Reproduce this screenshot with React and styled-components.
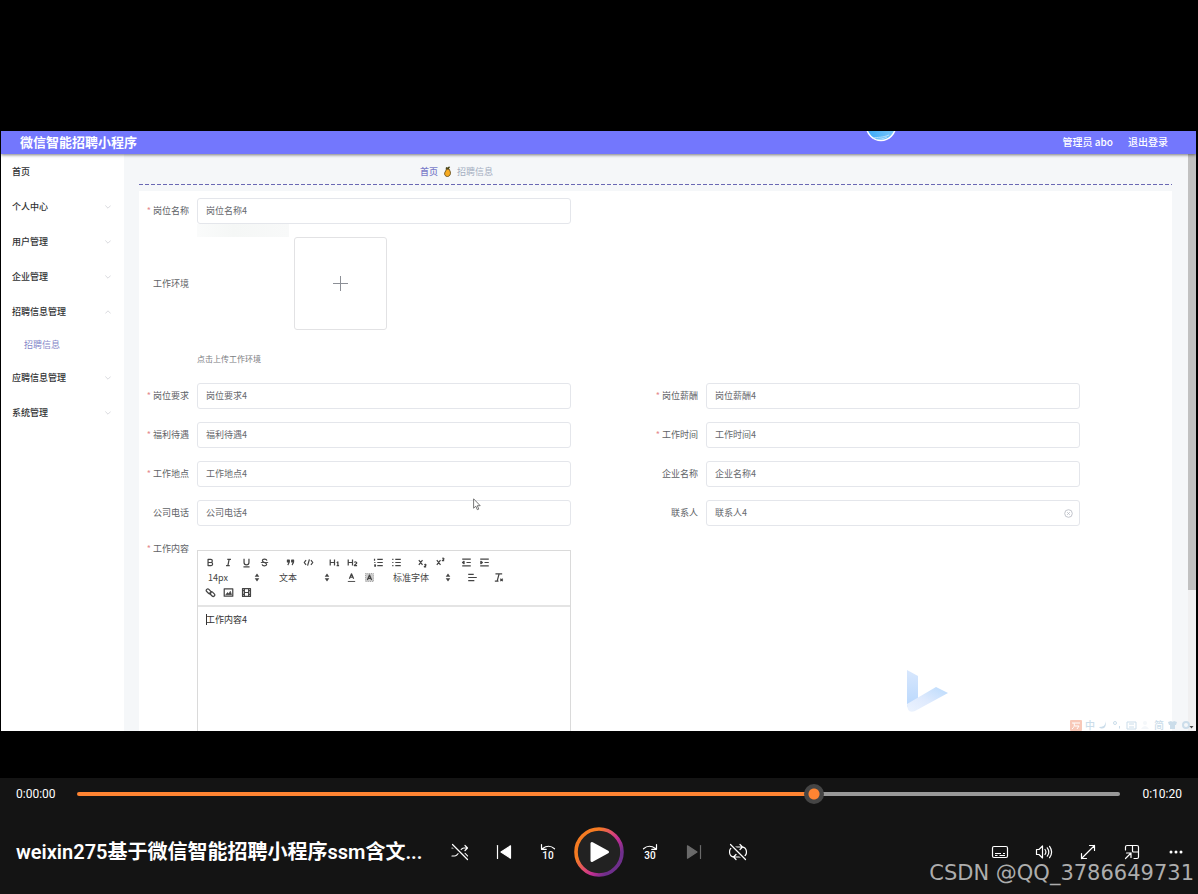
import React from "react";
import styled, { createGlobalStyle } from "styled-components";

const Global = createGlobalStyle`
  *, *::before, *::after { box-sizing: border-box; }
  body { margin: 0; background: #000; }
  button, input, select, textarea { font: inherit; color: inherit; margin: 0; padding: 0; border: 0; background: none; outline: none; }
  button { cursor: pointer; }
  a { color: inherit; text-decoration: none; }
  ul { list-style: none; margin: 0; padding: 0; }
  svg { display: block; flex: none; }
`;

/* ---------- player shell ---------- */

const Player = styled.div`
  display: flex;
  flex-direction: column;
  position: relative;
  min-height: 100vh;
  background: #000;
  color: #fff;
  font-family: Roboto, "Noto Sans CJK SC", sans-serif;
`;

const Stage = styled.main`
  flex: 1;
  display: flex;
  padding: 131px 2px 47px 1px;
`;

const Screen = styled.section`
  position: relative;
  flex: 1;
  min-width: 0;
  display: flex;
  flex-direction: column;
  overflow: hidden;
  background: #f5f7f9;
  color: #606266;
  font-family: "Noto Sans CJK SC", sans-serif;
  font-size: 9px;
  line-height: 12px;
`;

/* ---------- recorded admin page ---------- */

const TopBar = styled.header`
  position: relative;
  z-index: 1;
  flex: none;
  display: flex;
  align-items: center;
  justify-content: space-between;
  height: 23px;
  padding: 0 28px 2px 19px;
  background: #7377fd;
  color: #fff;
  box-shadow: 0 1px 3px rgba(0, 0, 0, 0.5);
`;

const SiteTitle = styled.h1`
  margin: 0;
  font-size: 13px;
  line-height: 20px;
  font-weight: 700;
`;

const Account = styled.div`
  display: flex;
  gap: 15px;
  font-size: 10px;
  line-height: 14px;
  font-weight: 500;
`;

const Orb = styled.svg`
  position: absolute;
  top: 0;
  left: 864px;
`;

const Body = styled.div`
  flex: 1;
  display: flex;
  min-height: 0;
`;

const Sidebar = styled.nav`
  flex: none;
  width: 123px;
  background: #fff;
  color: #303133;
`;

const MenuLink = styled.a`
  display: flex;
  align-items: center;
  justify-content: space-between;
  height: ${(p) => (p.$sub ? 31 : 35)}px;
  padding: 0 13px 0 ${(p) => (p.$sub ? 23 : 11)}px;
  color: ${(p) => (p.$sub ? "#8486c8" : "#303133")};
  font-weight: ${(p) => (p.$sub ? 400 : 500)};
`;

const Content = styled.div`
  flex: 1;
  min-width: 0;
  display: flex;
  flex-direction: column;
  padding: 0 16px 0 15px;
`;

const Crumbs = styled.div`
  display: flex;
  align-items: center;
  gap: 6px;
  height: 30px;
  padding: 5px 0 0 281px;
  color: #a3adc0;
`;

const CrumbHome = styled.a`
  color: #7b7cc9;
  font-weight: 500;
`;

const Dashes = styled.div`
  flex: none;
  height: 1px;
  margin-bottom: 6px;
  background: repeating-linear-gradient(90deg, #6a68b4 0 4px, transparent 4px 6px);
`;

const Panel = styled.form`
  flex: 1;
  display: flex;
  flex-direction: column;
  padding: 7px 15px 0 0;
  background: #fff;
`;

const Grid = styled.div`
  display: grid;
  grid-template-columns: 1fr 1fr;
  row-gap: 13px;
`;

const Field = styled.div`
  display: flex;
  align-items: center;
`;

const Label = styled.label`
  flex: none;
  width: 58px;
  padding-right: 8px;
  text-align: right;
  white-space: nowrap;
  color: #606266;

  &::before {
    content: "${(p) => (p.$required ? "*" : "")}";
    margin-right: 2px;
    color: #e58c8c;
  }
`;

const InputBox = styled.div`
  display: flex;
  align-items: center;
  flex: none;
  width: calc(100% - 135px);
  height: 26px;
  padding: 0 6px 0 8px;
  border: 1px solid #e4e6eb;
  border-radius: 3px;
  background: #fff;
`;

const TextInput = styled.input`
  flex: 1;
  min-width: 0;
  height: 14px;
  line-height: 14px;
  color: #66686d;
`;

const UploadRow = styled.div`
  display: flex;
  align-items: center;
  height: 93px;
  margin-top: 13px;
`;

const Preview = styled.div`
  align-self: flex-start;
  width: 92px;
  height: 92px;
  margin-right: 5px;
`;

const UploadButton = styled.button`
  display: grid;
  place-items: center;
  width: 93px;
  height: 93px;
  border: 1px solid #e2e2e4;
  border-radius: 3px;
`;

const UploadTip = styled.p`
  margin: 23px 0 18px;
  padding-left: 58px;
  font-size: 8px;
  line-height: 12px;
  color: #7b7d82;
`;

const EditorField = styled.div`
  flex: 1;
  display: flex;
  margin-top: 17px;
`;

const EditorBox = styled.div`
  flex: none;
  width: calc(50% - 135px);
  margin-top: 7px;
  display: flex;
  flex-direction: column;
  border: 1px solid #dadada;
  border-bottom: 0;
`;

const Toolbar = styled.div`
  padding: 4px 3px 5px;
  border-bottom: 2px solid #e4e4e4;
  color: #444;
`;

const ToolRow = styled.div`
  display: flex;
  gap: 8px;
  height: 15px;
`;

const ToolGroup = styled.div`
  display: flex;
`;

const Tool = styled.button`
  display: grid;
  place-items: center;
  width: 18px;
  height: 15px;
`;

const Picker = styled.label`
  display: flex;
  align-items: center;
  justify-content: space-between;
  width: ${(p) => p.$width}px;
  padding: 0 4px 0 7px;
`;

const PickerSelect = styled.select`
  appearance: none;
  flex: 1;
  min-width: 0;
  height: 15px;
  line-height: 15px;
`;

const EditorText = styled.textarea`
  flex: 1;
  display: block;
  width: 100%;
  padding: 7px 8px;
  resize: none;
  line-height: 12px;
  color: #333;
`;

const ScrollTrack = styled.div`
  flex: none;
  width: 8px;
  background: #f0f0f1;
`;

const ScrollThumb = styled.div`
  height: 75.5%;
  background: #c1c1c1;
`;

const Float = styled.svg`
  position: absolute;
  left: ${(p) => p.$left};
  right: ${(p) => p.$right};
  top: ${(p) => p.$top};
  bottom: ${(p) => p.$bottom};
  pointer-events: none;
`;

const ImeBar = styled.div`
  position: absolute;
  right: 0;
  bottom: 0;
  display: flex;
  align-items: center;
  gap: 3px;
  height: 12px;
  color: #cbddea;
  font-size: 10px;
  line-height: 12px;
  font-weight: 500;
`;

/* ---------- player controls ---------- */

const Controls = styled.footer`
  background: #141414;
`;

const SeekRow = styled.div`
  display: flex;
  align-items: center;
  height: 32px;
  padding: 0 16px;
  font-size: 12px;
  line-height: 16px;
`;

const Time = styled.span`
  flex: none;
  width: ${(p) => (p.$end ? "auto" : "61px")};
  padding-left: ${(p) => (p.$end ? 22 : 0)}px;
`;

const Seek = styled.input`
  appearance: none;
  flex: 1;
  min-width: 0;
  height: 20px;

  &::-webkit-slider-runnable-track {
    height: 4px;
    border-radius: 2px;
    background: linear-gradient(90deg, #ff8432 0 71%, #999 71%);
  }
  &::-webkit-slider-thumb {
    appearance: none;
    width: 20px;
    height: 20px;
    margin-top: -8px;
    border-radius: 50%;
    background: radial-gradient(circle, #ff8432 0 5px, #454545 6px);
  }
`;

const Deck = styled.div`
  display: grid;
  grid-template-columns: minmax(0, 1fr) auto minmax(0, 1fr);
  align-items: center;
  height: 84px;
`;

const MediaTitle = styled.h2`
  margin: 0;
  padding-left: 16px;
  font-size: 20px;
  line-height: 28px;
  font-weight: 600;
  white-space: nowrap;
  overflow: hidden;
`;

const Buttons = styled.div`
  display: flex;
  align-items: center;
  justify-content: flex-end;
`;

const IconButton = styled.button`
  display: grid;
  place-items: center;
  width: 44px;
  height: 44px;
  color: ${(p) => (p.disabled ? "#6a6a6a" : "#fff")};
`;

const PlayButton = styled.button`
  display: grid;
  place-items: center;
  width: 50px;
  height: 50px;
  margin: 0 4px;
`;

const Watermark = styled.div`
  position: absolute;
  right: 4px;
  bottom: 7px;
  font-family: "DejaVu Sans", sans-serif;
  font-size: 21px;
  line-height: 28px;
  color: #adadad;
`;

/* ---------- drawings ---------- */

const Line = ({ size = 18, children, w = 1.2 }) => (
  <svg width={size} height={size} viewBox={`0 0 ${size} ${size}`} fill="none" stroke="currentColor" strokeWidth={w} strokeLinecap="round" strokeLinejoin="round" aria-hidden="true">
    {children}
  </svg>
);

const Slash = () => (
  <>
    <path d="M1.5 1.5l15 15" stroke="#141414" strokeWidth="4" />
    <path d="M1.5 1.5l15 15" />
  </>
);

const Chevron = ({ up }) => (
  <svg width="6" height="4" viewBox="0 0 6 4" fill="none" stroke="#cfd1d6" strokeWidth="0.8" aria-hidden="true">
    <path d={up ? "M0.3 3.5 3 0.8 5.7 3.5" : "M0.3 0.5 3 3.2 5.7 0.5"} />
  </svg>
);

const Arrows = () => (
  <svg width="6" height="9" viewBox="0 0 6 9" fill="#444" aria-hidden="true">
    <path d="M3 .5 5.300 3.800H.7zM3 8.500.7 5.200h4.600z" />
  </svg>
);

const Pineapple = () => (
  <svg width="7" height="11" viewBox="0 0 7 11" aria-hidden="true">
    <path d="M1.600 3.600 2 1 3.400 1.600 5 .4 6.200 1 5 2.400 5.400 3.800z" fill="#4c4a1e" />
    <path d="M2.600 3.200h2.600L6.400 6c.5 2.600-.9 4.500-3 4.500S.2 8.800.7 6.800z" fill="#f7ab22" stroke="#5d4512" strokeWidth=".8" />
  </svg>
);

const toolIcons = {
  加粗: <path d="M5 4h4.500a2.500 2.500 0 0 1 0 5H5zM5 9h5a2.500 2.500 0 0 1 0 5H5z" />,
  斜体: <path d="M7 4h6M5 14h6M10 4 8 14" />,
  下划线: <path d="M5 3v6a4 4 0 0 0 8 0V3M4 16h10" />,
  删除线: (
    <>
      <path d="M13 6C12 2.500 5.500 3 5.500 6S12.500 9 12.500 12 6 15.500 5 12" />
      <path d="M3 9h12" strokeWidth="1.500" />
    </>
  ),
  引用: <path d="M4 5h3v3H4zM7 6c0 4-1 5.500-2.500 7M11 5h3v3h-3zM14 6c0 4-1 5.500-2.500 7" fill="currentColor" />,
  代码: <path d="M5 5 2 9l3 4M13 5l3 4-3 4M10.500 4 7.500 14" />,
  标题一: <path d="M2 4v10M9 4v10M2 9h7M12.500 9.500 14.500 8v6M12.500 14h4" />,
  标题二: <path d="M2 4v10M9 4v10M2 9h7M12 9c1-1.500 4-1 4 .8 0 1.500-4 2.700-4 4.200h4.500" />,
  有序列表: <path d="M7 4h9M7 9h9M7 14h9M2.500 3v3M2 9h2M2 13h2v2H2" />,
  无序列表: <path d="M7 4h9M7 9h9M7 14h9M2 4h2M2 9h2M2 14h2" />,
  下标: <path d="M3 5l6 8M9 5l-6 8M12 12.500c1-1 3-.5 2.500 1L12 16h3" />,
  上标: <path d="M3 5l6 8M9 5l-6 8M12 2.500c1-1 3-.5 2.500 1L12 6h3" />,
  减少缩进: <path d="M2 3.500h14M9 9h7M2 14.500h14M5 7 2.500 9 5 11z" />,
  增加缩进: <path d="M2 3.500h14M9 9h7M2 14.500h14M3 7l2.500 2L3 11z" />,
  字体颜色: (
    <>
      <path d="M5.500 11 9 3l3.500 8M7 8.500h4" />
      <path d="M3 15.500h12" strokeWidth="1.500" />
    </>
  ),
  背景颜色: (
    <>
      <path d="M2.500 2.500h13v13h-13z" fill="#ccc" stroke="#999" strokeWidth="1.500" strokeDasharray="1.500 1.500" />
      <path d="M5.500 13 9 5l3.500 8M7 10.500h4" />
    </>
  ),
  对齐: <path d="M2 4h9M2 9h14M2 14h10" />,
  清除格式: <path d="M4 3h11M10 3 7 14M3 15h6M12 11l4 4M16 11l-4 4" />,
  链接: (
    <>
      <rect x="1.500" y="4.500" width="9" height="5" rx="2.500" transform="rotate(45 6 7)" />
      <rect x="7.500" y="9" width="9" height="5" rx="2.500" transform="rotate(45 12 11.500)" />
    </>
  ),
  图片: (
    <>
      <path d="M2 3h14v12H2z" />
      <path d="M4.500 12.500l3-3.500 2 2 2.500-4 2 5.500z" fill="currentColor" strokeWidth="1" />
    </>
  ),
  视频: <path d="M2.500 2.500h13v13h-13zM5.500 2.500v13M12.500 2.500v13M5.500 9h7M2.500 6h3M2.500 12h3M12.500 6h3M12.500 12h3" />,
};

const ToolButton = ({ name }) => (
  <Tool type="button" aria-label={name}>
    <svg width="11" height="11" viewBox="0 0 18 18" fill="none" stroke="currentColor" strokeWidth="2" strokeLinejoin="round" aria-hidden="true">
      {toolIcons[name]}
    </svg>
  </Tool>
);

const ToolButtons = ({ names }) => (
  <ToolGroup>
    {names.map((n) => (
      <ToolButton key={n} name={n} />
    ))}
  </ToolGroup>
);

const PickerControl = ({ label, value, width }) => (
  <Picker $width={width}>
    <PickerSelect aria-label={label} defaultValue={value}>
      <option>{value}</option>
    </PickerSelect>
    <Arrows />
  </Picker>
);

const FormField = ({ id, label, required, clearable }) => (
  <Field>
    <Label htmlFor={id} $required={required}>
      {label}
    </Label>
    <InputBox>
      <TextInput id={id} defaultValue={`${label}4`} />
      {clearable && (
        <svg width="9" height="9" viewBox="0 0 9 9" fill="none" stroke="#b4b8c0" strokeWidth="0.8" aria-hidden="true">
          <circle cx="4.500" cy="4.500" r="3.800" />
          <path d="M3.200 3.200l2.600 2.600M5.800 3.200 3.200 5.800" />
        </svg>
      )}
    </InputBox>
  </Field>
);

const menu = [
  { text: "首页" },
  { text: "个人中心", chevron: "down" },
  { text: "用户管理", chevron: "down" },
  { text: "企业管理", chevron: "down" },
  { text: "招聘信息管理", chevron: "up" },
  { text: "招聘信息", sub: true },
  { text: "应聘信息管理", chevron: "down" },
  { text: "系统管理", chevron: "down" },
];

const fields = [
  { id: "requirement", label: "岗位要求", required: true },
  { id: "salary", label: "岗位薪酬", required: true },
  { id: "benefits", label: "福利待遇", required: true },
  { id: "hours", label: "工作时间", required: true },
  { id: "place", label: "工作地点", required: true },
  { id: "company", label: "企业名称" },
  { id: "phone", label: "公司电话" },
  { id: "contact", label: "联系人", clearable: true },
];

function AdminPage() {
  return (
    <Screen>
      <TopBar>
        <SiteTitle>微信智能招聘小程序</SiteTitle>
        <Account>
          <span>管理员 abo</span>
          <a href="#logout">退出登录</a>
        </Account>
        <Orb width="32" height="11" viewBox="0 0 32 11" aria-hidden="true">
          <defs>
            <linearGradient id="orb" x1="0" y1="0" x2="1" y2="0">
              <stop offset="0" stopColor="#3aa9f8" />
              <stop offset="1" stopColor="#7cc8fb" />
            </linearGradient>
          </defs>
          <circle cx="16" cy="-5" r="14.500" fill="url(#orb)" stroke="#fff" strokeWidth="1.500" />
          <path d="M8 7c5-1 9 0 16-3M11 8.300c5-.3 7-.3 11-2.300" fill="none" stroke="#c5e8ff" strokeWidth=".8" />
        </Orb>
      </TopBar>
      <Body>
        <Sidebar>
          <ul>
            {menu.map((m) => (
              <li key={m.text}>
                <MenuLink href="#menu" $sub={m.sub}>
                  {m.text}
                  {m.chevron && <Chevron up={m.chevron === "up"} />}
                </MenuLink>
              </li>
            ))}
          </ul>
        </Sidebar>
        <Content>
          <Crumbs>
            <CrumbHome href="#home">首页</CrumbHome>
            <Pineapple />
            <span>招聘信息</span>
          </Crumbs>
          <Dashes />
          <Panel>
            <Grid>
              <FormField id="post" label="岗位名称" required />
            </Grid>
            <UploadRow>
              <Label as="span">工作环境</Label>
              <Preview />
              <UploadButton type="button" aria-label="上传工作环境">
                <svg width="15" height="15" viewBox="0 0 15 15" fill="none" stroke="#8c8f96" strokeWidth="1" aria-hidden="true">
                  <path d="M7.500 0v15M0 7.500h15" />
                </svg>
              </UploadButton>
            </UploadRow>
            <UploadTip>点击上传工作环境</UploadTip>
            <Grid>
              {fields.map((f) => (
                <FormField key={f.id} {...f} />
              ))}
            </Grid>
            <EditorField>
              <Label htmlFor="detail" $required>
                工作内容
              </Label>
              <EditorBox>
                <Toolbar>
                  <ToolRow>
                    <ToolButtons names={["加粗", "斜体", "下划线", "删除线"]} />
                    <ToolButtons names={["引用", "代码"]} />
                    <ToolButtons names={["标题一", "标题二"]} />
                    <ToolButtons names={["有序列表", "无序列表"]} />
                    <ToolButtons names={["下标", "上标"]} />
                    <ToolButtons names={["减少缩进", "增加缩进"]} />
                  </ToolRow>
                  <ToolRow>
                    <PickerControl label="字号" value="14px" width={63} />
                    <PickerControl label="段落" value="文本" width={62} />
                    <ToolButtons names={["字体颜色", "背景颜色"]} />
                    <PickerControl label="字体" value="标准字体" width={69} />
                    <ToolButtons names={["对齐"]} />
                    <ToolButtons names={["清除格式"]} />
                  </ToolRow>
                  <ToolRow>
                    <ToolButtons names={["链接", "图片", "视频"]} />
                  </ToolRow>
                </Toolbar>
                <EditorText id="detail" defaultValue="工作内容4" />
              </EditorBox>
            </EditorField>
          </Panel>
        </Content>
        <ScrollTrack>
          <ScrollThumb />
        </ScrollTrack>
      </Body>

      <Float $left="196px" $top="93px" width="92" height="13" aria-hidden="true">
        <defs>
          <linearGradient id="ghost" x1="0" x2="1">
            <stop offset="0" stopColor="#fafbfb" />
            <stop offset="0.4" stopColor="#f5f7f6" />
            <stop offset="1" stopColor="#f8f9f9" />
          </linearGradient>
        </defs>
        <rect width="92" height="13" fill="url(#ghost)" />
      </Float>

      <Float $left="204px" $top="483px" width="2" height="11" aria-hidden="true">
        <path d="M1.500 0v11" stroke="#333" strokeWidth="1" />
      </Float>

      <Float $left="472px" $top="367px" width="8" height="13" viewBox="0 0 8 13" aria-hidden="true">
        <path d="M.6.8v9.400l2.200-2 1.500 3.500 1.500-.6-1.500-3.400h2.900z" fill="#fff" stroke="#555" strokeWidth=".8" />
      </Float>

      <Float $right="244px" $bottom="16px" width="50" height="50" viewBox="0 0 50 50" aria-hidden="true">
        <defs>
          <linearGradient id="stem" x1="0" y1="0" x2="0" y2="1">
            <stop offset="0" stopColor="#d8e7fd" />
            <stop offset="1" stopColor="#b9d8fd" />
          </linearGradient>
          <linearGradient id="arm" x1="0" y1="1" x2="1" y2="0">
            <stop offset="0" stopColor="#ecf3fe" />
            <stop offset="0.45" stopColor="#dfeafd" />
            <stop offset="1" stopColor="#b9dafc" />
          </linearGradient>
        </defs>
        <path d="M5 5 16 11v24L5 42z" fill="url(#stem)" />
        <path d="M5 39 34 22l12 6-33 18q-8 3-8-7" fill="url(#arm)" />
      </Float>

      <ImeBar aria-hidden="true">
        <svg width="12" height="11" viewBox="0 0 12 11">
          <rect width="12" height="11" rx="1" fill="#f8c8b8" />
          <path d="M2 3h8M4 3c1 3 0 4-2 6M5 6h4l-2 3" stroke="#fff" fill="none" />
        </svg>
        <span>中</span>
        <svg width="11" height="10" viewBox="0 0 11 10">
          <path d="M7 1c1 4-1 6-6 6 3 4 9 0 6-6" fill="currentColor" />
        </svg>
        <svg width="11" height="10" viewBox="0 0 11 10" fill="none" stroke="currentColor">
          <circle cx="3" cy="3" r="1.500" />
          <path d="M7.500 6v2.500" />
        </svg>
        <svg width="11" height="10" viewBox="0 0 11 10" fill="none" stroke="currentColor">
          <path d="M1 2h9v7H1zM3 4h5M3 7h5" />
        </svg>
        <svg width="11" height="10" viewBox="0 0 11 10" fill="#f4f7fa">
          <circle cx="5" cy="3" r="2" />
          <path d="M1 9q4-6 8 0" />
        </svg>
        <span>简</span>
        <svg width="11" height="10" viewBox="0 0 11 10" fill="currentColor">
          <path d="M1 2 4 1q1.500 1.500 3 0l3 1-1 3H8v4H3V5H2z" />
        </svg>
        <svg width="15" height="10" viewBox="0 0 15 10">
          <circle cx="5" cy="5" r="3" fill="none" stroke="currentColor" strokeWidth="2" />
          <path d="M8.500 6h4L10.500 8.500z" fill="#444" />
        </svg>
      </ImeBar>
    </Screen>
  );
}

const SkipTen = ({ text, forward }) => (
  <svg width="18" height="18" viewBox="0 0 18 18" aria-hidden="true">
    <path
      d={forward ? "M2.500 5.800Q8 .8 14.500 5.600M15.500 1.500v4.800h-4.800" : "M15.500 5.800Q10 .8 3.500 5.600M2.500 1.500v4.800h4.800"}
      fill="none"
      stroke="currentColor"
      strokeWidth="1.200"
      strokeLinecap="round"
      strokeLinejoin="round"
    />
    <text x="9" y="16" textAnchor="middle" fontSize="10" fontFamily="Roboto, sans-serif" fontWeight="500" fill="currentColor">
      {text}
    </text>
  </svg>
);

function PlayerControls() {
  return (
    <Controls>
      <SeekRow>
        <Time>0:00:00</Time>
        <Seek type="range" min="0" max="100" defaultValue="71" aria-label="播放进度" />
        <Time $end>0:10:20</Time>
      </SeekRow>
      <Deck>
        <MediaTitle>weixin275基于微信智能招聘小程序ssm含文...</MediaTitle>
        <Buttons>
          <IconButton type="button" aria-label="随机播放">
            <Line>
              <path d="M1 5h2.500C8 5 8.500 13 13 13h3.500M1 13h2.500C8 13 8.500 5 13 5h3.500M14 2.500 16.500 5 14 7.500M14 10.500l2.500 2.500-2.500 2.500" />
              <Slash />
            </Line>
          </IconButton>
          <IconButton type="button" aria-label="上一个">
            <Line>
              <path d="M2.500 2.500v13" />
              <path d="M15.500 2.800v12.400L6 9z" fill="currentColor" />
            </Line>
          </IconButton>
          <IconButton type="button" aria-label="后退 10 秒">
            <SkipTen text="10" />
          </IconButton>
          <PlayButton type="button" aria-label="播放">
            <svg width="50" height="50" viewBox="0 0 50 50" aria-hidden="true">
              <defs>
                <linearGradient id="ring" x1="0.1" y1="0.2" x2="0.9" y2="0.8">
                  <stop offset="0.2" stopColor="#f57b22" />
                  <stop offset="0.45" stopColor="#e0506a" />
                  <stop offset="0.65" stopColor="#c42f92" />
                  <stop offset="0.9" stopColor="#6f2f8c" />
                </linearGradient>
              </defs>
              <circle cx="25" cy="25" r="23" fill="#222" stroke="url(#ring)" strokeWidth="3.600" />
              <path d="M18 16.500v17L33.500 25z" fill="#fff" stroke="#fff" strokeWidth="3" strokeLinejoin="round" />
            </svg>
          </PlayButton>
          <IconButton type="button" aria-label="前进 30 秒">
            <SkipTen text="30" forward />
          </IconButton>
          <IconButton type="button" aria-label="下一个" disabled>
            <Line>
              <path d="M15.500 2.500v13" />
              <path d="M2.500 2.800v12.400L12 9z" fill="currentColor" />
            </Line>
          </IconButton>
          <IconButton type="button" aria-label="循环播放">
            <Line>
              <path d="M5 14.200A5.200 5.200 0 0 1 4.500 4H13M11 1.500 13.500 4 11 6.500M13 3.800A5.200 5.200 0 0 1 13.500 14H5M7 11.500 4.500 14 7 16.500" />
              <Slash />
            </Line>
          </IconButton>
        </Buttons>
        <Buttons>
          <IconButton type="button" aria-label="字幕">
            <Line>
              <rect x="1.500" y="3.500" width="15" height="11" rx="1.500" />
              <path d="M4 10.500h6M12 10.500h2M4 12.500h2.500M8.500 12.500H14" strokeWidth="1" strokeLinecap="butt" />
            </Line>
          </IconButton>
          <IconButton type="button" aria-label="音量">
            <Line>
              <path d="M1.500 6.500H4L7.500 3v12L4 11.500H1.500zM10 6.500q1.800 2.500 0 5M12.300 4.800q3 4.200 0 8.400M14.600 3.300q4 5.700 0 11.400" />
            </Line>
          </IconButton>
          <IconButton type="button" aria-label="全屏">
            <Line>
              <path d="M2.500 15.500l13-13M10.500 2.500h5v5M2.500 10.500v5h5" />
            </Line>
          </IconButton>
          <IconButton type="button" aria-label="小窗播放">
            <Line>
              <path d="M2.500 7V4q0-1.500 1.500-1.500h10q1.500 0 1.500 1.500v10q0 1.500-1.500 1.500h-3M9.500 2.500V8q0 1 1 1h5M2.500 15.500 8 10M3.500 10H8v4.500" />
            </Line>
          </IconButton>
          <IconButton type="button" aria-label="更多">
            <svg width="16" height="16" viewBox="0 0 16 16" fill="currentColor" aria-hidden="true">
              <circle cx="3" cy="8" r="1.500" />
              <circle cx="8" cy="8" r="1.500" />
              <circle cx="13" cy="8" r="1.500" />
            </svg>
          </IconButton>
        </Buttons>
      </Deck>
    </Controls>
  );
}

export default function App() {
  return (
    <Player>
      <Global />
      <Stage>
        <AdminPage />
      </Stage>
      <PlayerControls />
      <Watermark>CSDN @QQ_3786649731</Watermark>
    </Player>
  );
}
